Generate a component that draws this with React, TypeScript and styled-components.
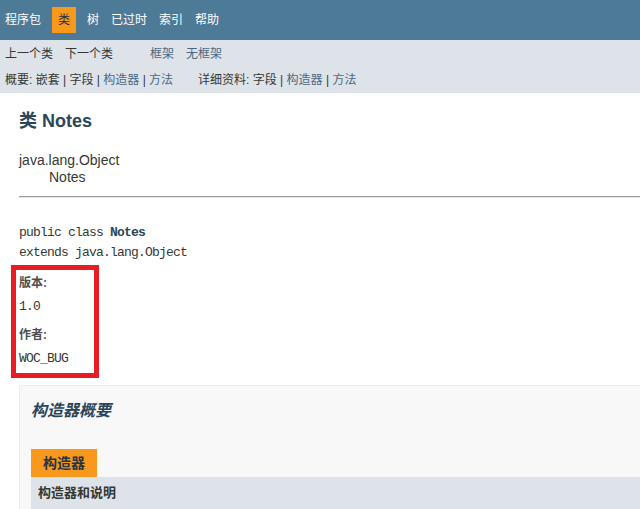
import React from "react";
import styled, { createGlobalStyle } from "styled-components";

const GlobalStyle = createGlobalStyle`
  html, body { margin: 0; padding: 0; background: #ffffff; overflow: hidden; }
  body {
    font-family: "Liberation Sans", "Noto Sans CJK SC", Arial, sans-serif;
    color: #353833;
    font-size: 14px;
  }
  * { box-sizing: border-box; }
`;

const SANS = `"Liberation Sans", "Noto Sans CJK SC", Arial, sans-serif`;
const MONO = `"Liberation Mono", "Noto Sans CJK SC", monospace`;

const Page = styled.div`
  width: 760px;
`;

const TopNav = styled.nav`
  height: 40px;
  background: #4d7a97;
  padding-top: 7px;
`;

const NavList = styled.ul`
  display: flex;
  list-style: none;
  margin: 0;
  padding: 0;
`;

const NavItem = styled.li<{ $active?: boolean }>`
  padding: 5px 6px;
  font-size: 12px;
  line-height: 16px;
  color: ${(p) => (p.$active ? "#253441" : "#ffffff")};
  background: ${(p) => (p.$active ? "#f8981d" : "transparent")};
  margin: ${(p) => (p.$active ? "0 5px" : "0")};
  &:first-child { padding-left: 5px; }
`;

const SubNav = styled.div`
  background: #dee3e9;
  padding: 6px 0 5px 5px;
  display: flex;
  flex-direction: column;
  gap: 10px;
`;

const SubRow = styled.div<{ $gap: number }>`
  display: flex;
  gap: ${(p) => p.$gap}px;
  font-size: 12px;
  line-height: 16px;
  white-space: nowrap;
`;

const Group = styled.div`
  display: flex;
  gap: 12px;
`;

const Plain = styled.span`
  color: #353833;
`;

const Link = styled.span`
  color: #4a6782;
`;

const Content = styled.main`
  padding-left: 19px;
`;

const Title = styled.h2`
  margin: 17px 0 0 0;
  font-size: 18px;
  line-height: 22px;
  font-weight: bold;
  color: #2c4557;
`;

const Inheritance = styled.div`
  margin-top: 20px;
  font-size: 14px;
  line-height: 17px;
  color: #353833;
`;

const InheritChild = styled.div`
  padding-left: 30px;
`;

const Rule = styled.hr`
  margin: 10px 0 0 0;
  border: none;
  border-top: 1px solid #9c9c9c;
  border-bottom: 1px solid #e4e4e4;
  height: 0;
`;

const Signature = styled.pre`
  margin: 25px 0 0 0;
  font-family: ${MONO};
  font-size: 13px;
  letter-spacing: -0.8px;
  line-height: 20px;
  color: #353833;
`;

const Strong = styled.b`
  font-weight: bold;
  color: #2c4557;
`;

const Highlight = styled.dl`
  width: 88px;
  margin: 2px 0 0 -8px;
  padding: 5px 3px 6px 3px;
  border: 5px solid #e81c24;
`;

const TagLabel = styled.dt`
  font-family: ${SANS};
  font-size: 12px;
  line-height: 16px;
  font-weight: bold;
  color: #4e4e4e;
  margin: 0 0 8px 0;
`;

const TagValue = styled.dd<{ $last?: boolean }>`
  margin: 0 0 ${(p) => (p.$last ? 0 : 12)}px 0;
  font-family: ${MONO};
  font-size: 13px;
  letter-spacing: -0.8px;
  line-height: 16px;
  color: #353833;
`;

const SummaryBlock = styled.section`
  margin-top: 7px;
  border: 1px solid #ededed;
  background: #f8f8f8;
  padding: 15px 0 20px 11px;
`;

const SummaryTitle = styled.h3`
  margin: 0;
  font-size: 16px;
  line-height: 20px;
  font-style: italic;
  font-weight: bold;
  color: #2c4557;
`;

const Tab = styled.div`
  display: inline-block;
  margin-top: 28px;
  height: 28px;
  padding: 0 12px;
  background: #f8981d;
  color: #253441;
  font-size: 14px;
  line-height: 28px;
  font-weight: bold;
  vertical-align: top;
`;

const TableHead = styled.div`
  background: #dee3e9;
  padding: 8px 7px 10px 7px;
  font-size: 13px;
  line-height: 16px;
  font-weight: bold;
  color: #353833;
`;

export default function App() {
  return (
    <Page>
      <GlobalStyle />
      <TopNav>
        <NavList>
          <NavItem>程序包</NavItem>
          <NavItem $active>类</NavItem>
          <NavItem>树</NavItem>
          <NavItem>已过时</NavItem>
          <NavItem>索引</NavItem>
          <NavItem>帮助</NavItem>
        </NavList>
      </TopNav>
      <SubNav>
        <SubRow $gap={37}>
          <Group>
            <Plain>上一个类</Plain>
            <Plain>下一个类</Plain>
          </Group>
          <Group>
            <Link>框架</Link>
            <Link>无框架</Link>
          </Group>
        </SubRow>
        <SubRow $gap={25}>
          <span>
            <Plain>概要:&nbsp;嵌套&nbsp;|&nbsp;</Plain>
            <Plain>字段</Plain>
            <Plain>&nbsp;|&nbsp;</Plain>
            <Link>构造器</Link>
            <Plain>&nbsp;|&nbsp;</Plain>
            <Link>方法</Link>
          </span>
          <span>
            <Plain>详细资料:&nbsp;字段&nbsp;|&nbsp;</Plain>
            <Link>构造器</Link>
            <Plain>&nbsp;|&nbsp;</Plain>
            <Link>方法</Link>
          </span>
        </SubRow>
      </SubNav>
      <Content>
        <Title>类 Notes</Title>
        <Inheritance>
          <div>java.lang.Object</div>
          <InheritChild>Notes</InheritChild>
        </Inheritance>
        <Rule />
        <Signature>
          public class <Strong>Notes</Strong>
          {"\n"}extends java.lang.Object
        </Signature>
        <Highlight>
          <TagLabel>版本:</TagLabel>
          <TagValue>1.0</TagValue>
          <TagLabel>作者:</TagLabel>
          <TagValue $last>WOC_BUG</TagValue>
        </Highlight>
        <SummaryBlock>
          <SummaryTitle>构造器概要</SummaryTitle>
          <Tab>构造器</Tab>
          <TableHead>构造器和说明</TableHead>
        </SummaryBlock>
      </Content>
    </Page>
  );
}
